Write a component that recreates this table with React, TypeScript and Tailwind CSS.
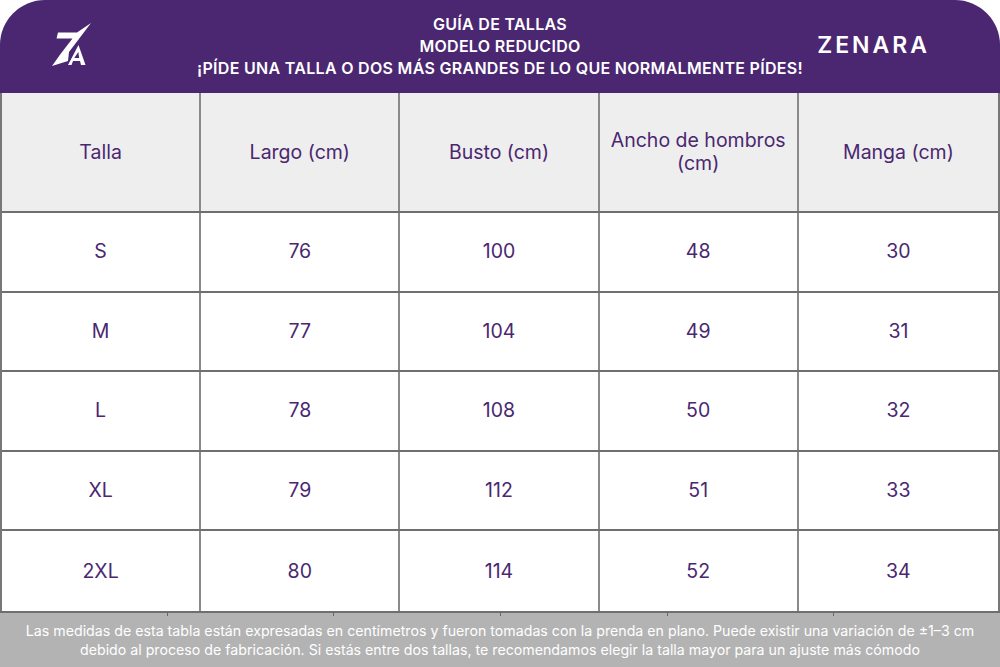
import React from "react";

const headers = ["Talla", "Largo (cm)", "Busto (cm)", "Ancho de hombros (cm)", "Manga (cm)"];
const rows = [
  ["S", "76", "100", "48", "30"],
  ["M", "77", "104", "49", "31"],
  ["L", "78", "108", "50", "32"],
  ["XL", "79", "112", "51", "33"],
  ["2XL", "80", "114", "52", "34"],
];

function Logo() {
  return (
    <svg width="45" height="48" viewBox="0 0 45 48" className="shrink-0">
      <polygon points="10,11.5 29,11.5 43,2 21,31 20,40 4,45 12.5,33 24.5,17.5 8.5,17.5" fill="#fff" />
      <polygon points="20,44 30.5,24 37.5,44 33,44 32,40 25,40 23.5,44" fill="#fff" />
      <polygon points="26.3,37 31.2,37 30.3,31" fill="#4a2770" />
    </svg>
  );
}

export default function App() {
  return (
    <div className="w-[1000px] h-[667px] bg-white flex flex-col overflow-hidden" style={{ fontFamily: "Inter, 'Open Sans', sans-serif" }}>
      <div className="h-[93px] bg-[#4a2770] rounded-t-[45px] flex items-center">
        <div className="w-[180px] flex pl-[48px] -mt-[4px]">
          <Logo />
        </div>
        <div className="flex-1 flex flex-col items-center text-white font-semibold text-[16px] leading-[22px] tracking-[0.3px] -mt-[2px]">
          <div>GUÍA DE TALLAS</div>
          <div>MODELO REDUCIDO</div>
          <div className="whitespace-nowrap">¡PÍDE UNA TALLA O DOS MÁS GRANDES DE LO QUE NORMALMENTE PÍDES!</div>
        </div>
        <div className="w-[180px] flex justify-end pr-[70px] -mt-[2px]">
          <div className="text-white font-semibold text-[23px] tracking-[3px]">ZENARA</div>
        </div>
      </div>
      <div className="flex flex-col border-l-2 border-r-2 border-[#777]">
        <div className="grid grid-cols-5 h-[120px] bg-[#eeeeee] border-b-2 border-[#6f6f6f]">
          {headers.map((h, i) => (
            <div key={i} className={`flex items-center justify-center text-center px-[8px] text-[#4a2770] text-[19.5px] leading-[23px] ${i < 4 ? "border-r-2 border-[#8a8a8a]" : ""}`}>
              <span className={i === 3 ? "w-[180px]" : ""}>{h}</span>
            </div>
          ))}
        </div>
        {rows.map((r, ri) => (
          <div key={ri} className={`grid grid-cols-5 h-[79.6px] ${ri < 4 ? "border-b-2 border-[#6f6f6f]" : ""}`}>
            {r.map((c, ci) => (
              <div key={ci} className={`flex items-center justify-center text-[#4a2770] text-[19.5px] ${ci < 4 ? "border-r-2 border-[#8a8a8a]" : ""}`}>
                {c}
              </div>
            ))}
          </div>
        ))}
      </div>
      <div className="flex-1 bg-[#b3b3b3] border-t-2 border-[#6f6f6f] flex flex-col">
        <div className="grid grid-cols-6 h-[3px]">
          <div></div>
          <div className="border-l border-[#666]"></div>
          <div className="border-l border-[#666]"></div>
          <div className="border-l border-[#666]"></div>
          <div className="border-l border-[#666]"></div>
          <div className="border-l border-[#666]"></div>
        </div>
        <div className="flex-1 flex flex-col items-center justify-center text-white text-[14.2px] leading-[19px] text-center -mt-[3px] whitespace-nowrap">
          <div>Las medidas de esta tabla están expresadas en centímetros y fueron tomadas con la prenda en plano. Puede existir una variación de ±1–3 cm</div>
          <div>debido al proceso de fabricación. Si estás entre dos tallas, te recomendamos elegir la talla mayor para un ajuste más cómodo</div>
        </div>
      </div>
    </div>
  );
}
